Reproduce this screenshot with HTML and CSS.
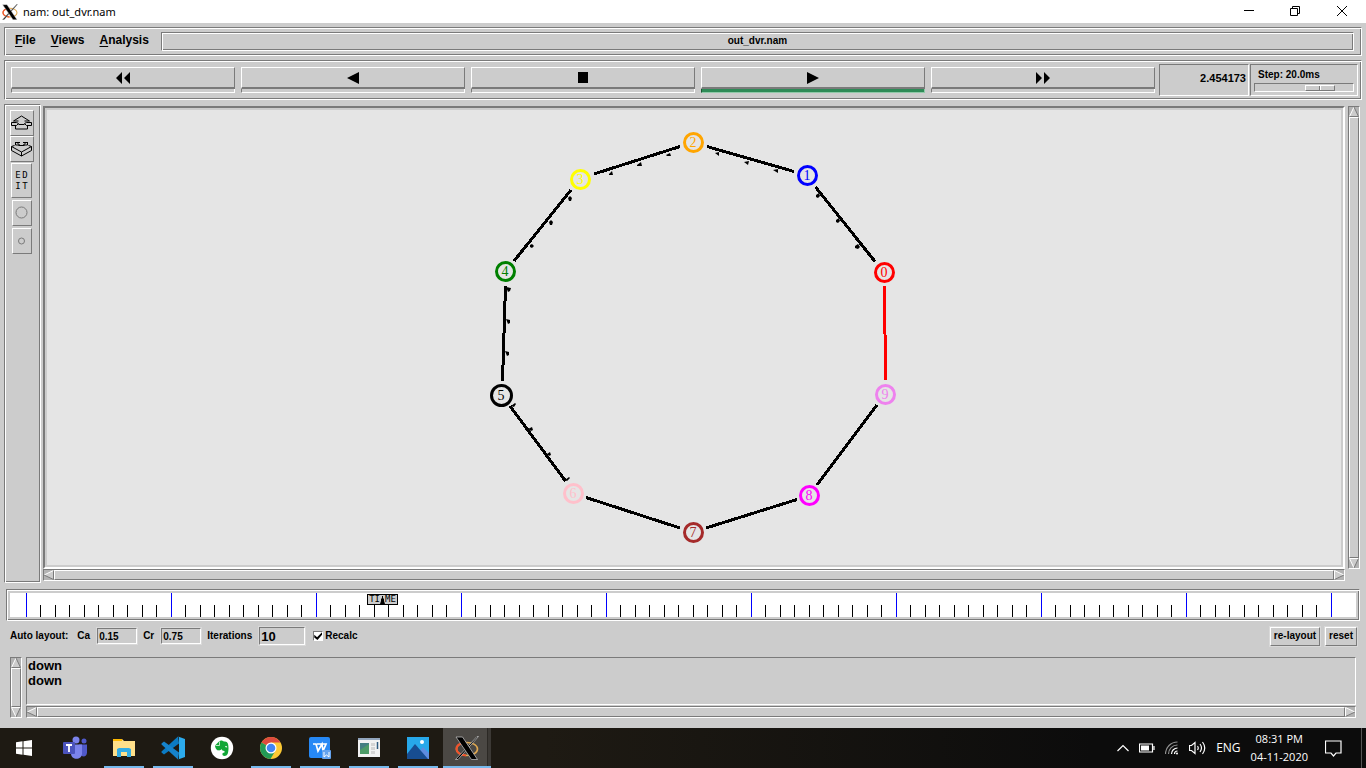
FILE: index.html
```html
<!DOCTYPE html>
<html lang="en">
<head>
<meta charset="utf-8">
<title>nam: out_dvr.nam</title>
<link rel="stylesheet" href="styles.css">
</head>
<body>
<svg width="0" height="0" class="defs" aria-hidden="true">
  <symbol id="xlogo" viewBox="0 0 24 24">
    <ellipse cx="12" cy="13" rx="10.5" ry="6.5" fill="none" stroke="#e0a850" stroke-width="1.6"/>
    <path d="M11 6.500C4 7 1 10 1.500 13.500S6 19 11 19.500" fill="none" stroke="#f0522c" stroke-width="2"/>
    <path d="M22 .5h1.500L3 23.500H.5z" fill="#000" stroke="#ccc" stroke-width=".7"/>
    <path d="M1 1h6.500L22.500 23.500h-6z" fill="#000" stroke="#ccc" stroke-width=".7"/>
  </symbol>
  <symbol id="arrow-up" viewBox="0 0 10 10"><path d="M5 0L9.500 9.500H.5z" fill="#ccc"/><path d="M5 0L.5 9.500" stroke="#fff"/><path d="M5 0L9.500 9.500H.5" fill="none" stroke="#7a7a7a"/></symbol>
  <symbol id="arrow-down" viewBox="0 0 10 10"><path d="M.5 .5h9L5 10z" fill="#ccc"/><path d="M5 10L.5 .5h9" fill="none" stroke="#fff"/><path d="M9.500 .5L5 10" stroke="#7a7a7a"/></symbol>
  <symbol id="arrow-left" viewBox="0 0 10 10"><path d="M0 5L9.500 .5v9z" fill="#ccc"/><path d="M0 5L9.500 .5" stroke="#fff"/><path d="M9.500 .5v9L0 5" fill="none" stroke="#7a7a7a"/></symbol>
  <symbol id="arrow-right" viewBox="0 0 10 10"><path d="M10 5L.5 .5v9z" fill="#ccc"/><path d="M10 5L.5 .5v9" fill="none" stroke="#fff"/><path d="M.5 9.500L10 5" stroke="#7a7a7a"/></symbol>
</svg>

<header class="titlebar">
  <svg class="title-icon" viewBox="0 0 24 24"><use href="#xlogo"/></svg>
  <h1 class="title">nam: out_dvr.nam</h1>
  <button class="win-btn" aria-label="Minimize"><svg width="12" height="12"><path d="M1 4.500h10" stroke="#000"/></svg></button>
  <button class="win-btn" aria-label="Restore"><svg width="12" height="12"><path d="M1.500 2.500h7v7h-7zM3.500 2V.5h7v7H9" fill="none" stroke="#000"/></svg></button>
  <button class="win-btn" aria-label="Close"><svg width="12" height="12"><path d="M1 0l10 10M11 0L1 10" stroke="#000"/></svg></button>
</header>

<main class="app">
  <nav class="menubar groove">
    <button class="menu"><u>F</u>ile</button>
    <button class="menu"><u>V</u>iews</button>
    <button class="menu"><u>A</u>nalysis</button>
    <div class="filename groove">out_dvr.nam</div>
  </nav>

  <section class="toolbar groove">
    <div class="transport">
      <button class="step-btn" aria-label="Rewind"><span class="face"><svg width="14" height="12"><path d="M0 6L6 0v12zM8 6l6-6v12z"/></svg></span><span class="lamp"></span></button>
      <button class="step-btn" aria-label="Play backward"><span class="face"><svg width="12" height="12"><path d="M0 6L12 0v12z"/></svg></span><span class="lamp"></span></button>
      <button class="step-btn" aria-label="Stop"><span class="face"><svg width="10" height="11"><path d="M0 0h10v11H0z"/></svg></span><span class="lamp"></span></button>
      <button class="step-btn" aria-label="Play forward"><span class="face"><svg width="12" height="12"><path d="M12 6L0 0v12z"/></svg></span><span class="lamp lamp-on"></span></button>
      <button class="step-btn" aria-label="Fast forward"><span class="face"><svg width="14" height="12"><path d="M6 6L0 0v12zM14 6L8 0v12z"/></svg></span><span class="lamp"></span></button>
    </div>
    <output class="clock sunken">2.454173</output>
    <div class="rate sunken">
      <label for="rate">Step: 20.0ms</label>
      <input type="range" id="rate" class="slider" min="0" max="100" value="74">
    </div>
  </section>

  <section class="workspace">
    <aside class="tools groove">
      <button class="tool" aria-label="Zoom in"><svg width="22" height="16" fill="none" stroke="#000"><path d="M10.500 1L2.500 6M10.500 1l8 5M2.500 6h5M18.500 6h-5M.5 7.500h5l2 1-2 2h-5zM20.500 7.500h-5l-2 1 2 2h5zM4.500 10.500v3.500h12v-3.500M7.500 9.500h6"/></svg></button>
      <button class="tool" aria-label="Zoom out"><svg width="22" height="17" fill="none" stroke="#000"><path d="M5 1.500h4M12 1.500h4.500M4.500 1v3h4l-2-2M16.500 1v3h-4l2-2M7.500 4.500h6M.5 5.500l3-1M20.500 5.500l-3-1M.5 5.500v4l10 5.500 10-5.500v-4l-10 5.500zM10.500 11v4"/></svg></button>
      <button class="tool tool-edit"><span>E</span><span>D</span><span>I</span><span>T</span></button>
      <button class="tool tool-node" aria-label="Larger nodes"><svg width="14" height="14"><circle cx="6.500" cy="6.500" r="5.500"/></svg></button>
      <button class="tool tool-node" aria-label="Smaller nodes"><svg width="14" height="14"><circle cx="6.500" cy="7" r="3"/></svg></button>
    </aside>

    <div class="view">
      <div class="canvas">
        <svg class="network" width="421" height="414" viewBox="484 131 421 414">
          <g class="links">
            <path d="M594 174L680 146.500M571 190L514 261M505.500 286L502.500 381M510 406L565.500 481M586 497.500L680 528M706 528L797 499.500M817 485L877 405M815.500 187L875 261.500M707 146.500L794 171.500"/>
            <path class="link-down" d="M884.500 286L885.500 380"/>
          </g>
          <path class="packets" d="M715 153l4-1v4zM744 162l5-1-1 4zM773 170l5-1v4zM816 195l3-2 1 3-2 2-2-1zM836 220l3-2 1 3-2 2-2-1zM855 246l3-2 2 3-2 2-3-1zM609 174l3-3 1 4h-4zM637 165l4-3 1 4h-5zM666 155l4-2 1 3h-4zM568 198l2-2 2 2-1 3h-2zM549 222l2-2 2 2-1 3h-2zM530 245l2-1 2 2-2 2-2-1zM506 287l5 1-1 3-2 1zM506 319l4 1v3l-2 1zM505 351l4 1v3l-2 1zM511 406l4-3 1 1-2 3zM528 429l4-2 1 3-2 1zM547 454l3-2 1 3-2 1zM565 480l4-3 1 1-3 3z"/>
          <g class="node n0"><circle cx="884.500" cy="272.500" r="9"/><text x="884" y="277">0</text></g>
          <g class="node n1"><circle cx="807.500" cy="175.500" r="9"/><text x="807" y="180">1</text></g>
          <g class="node n2"><circle cx="693.500" cy="142.500" r="9"/><text x="693" y="147">2</text></g>
          <g class="node n3"><circle cx="580.500" cy="179.500" r="9"/><text x="580" y="184">3</text></g>
          <g class="node n4"><circle cx="505.500" cy="271.500" r="9"/><text x="505" y="276">4</text></g>
          <g class="node n5"><circle cx="501.500" cy="395.500" r="10"/><text x="501" y="400">5</text></g>
          <g class="node n6"><circle cx="573.500" cy="493.500" r="9"/><text x="573" y="498">6</text></g>
          <g class="node n7"><circle cx="693.500" cy="532.500" r="9"/><text x="693" y="537">7</text></g>
          <g class="node n8"><circle cx="809.500" cy="495.500" r="9"/><text x="809" y="500">8</text></g>
          <g class="node n9"><circle cx="885.500" cy="394.500" r="9"/><text x="885" y="399">9</text></g>
        </svg>
      </div>
      <div class="scroll scroll-h"><svg><use href="#arrow-left"/></svg><div class="thumb"></div><svg><use href="#arrow-right"/></svg></div>
    </div>
    <div class="scroll scroll-v"><svg><use href="#arrow-up"/></svg><div class="thumb"></div><svg><use href="#arrow-down"/></svg></div>
  </section>

  <section class="timeline groove">
    <div class="track">
      <svg class="ticks" width="100%" height="24">
        <defs><pattern id="tick" x="16" width="145" height="24" patternUnits="userSpaceOnUse">
          <path fill="#00f" d="M0 0h1v24H0z"/>
          <path d="M14 12h1v12h-1zM29 12h1v12h-1zM43 12h1v12h-1zM58 12h1v12h-1zM72 12h1v12h-1zM87 12h1v12h-1zM101 12h1v12h-1zM116 12h1v12h-1zM130 12h1v12h-1z"/>
        </pattern></defs>
        <rect class="tick-area" x="16" height="24" fill="url(#tick)"/>
      </svg>
      <div class="marker"><span>TI</span><svg width="5" height="8"><path d="M2 0h1v2l1 1v2l1 3H0l1-3V3l1-1z"/></svg><span>ME</span></div>
    </div>
  </section>

  <form class="layout-form">
    <span class="form-title">Auto layout:</span>
    <label for="ca">Ca</label><input id="ca" class="field" type="text" value="0.15">
    <label for="cr">Cr</label><input id="cr" class="field" type="text" value="0.75">
    <label for="iter">Iterations</label><input id="iter" class="field field-large" type="text" value="10">
    <label class="check"><input type="checkbox" checked>Recalc</label>
    <button type="button" class="push push-first">re-layout</button>
    <button type="button" class="push">reset</button>
  </form>

  <section class="log">
    <div class="scroll scroll-v"><svg><use href="#arrow-up"/></svg><div class="thumb"></div><svg><use href="#arrow-down"/></svg></div>
    <div class="log-body">
      <textarea class="log-text sunken" rows="3" readonly aria-label="Annotations">down
down</textarea>
      <div class="scroll scroll-h"><svg><use href="#arrow-left"/></svg><div class="thumb"></div><svg><use href="#arrow-right"/></svg></div>
    </div>
  </section>
</main>

<footer class="taskbar">
  <button class="task" aria-label="Start"><svg width="16" height="16" fill="#fff"><path d="M0 2.200L6.500 1.300v6.200H0zM7.500 1.200L16 0v7.500H7.500zM0 8.500h6.500v6.200L0 13.800zM7.500 8.500H16V16l-8.500-1.200z"/></svg></button>
  <div class="tasks">
    <button class="task" aria-label="Teams"><svg width="24" height="24"><circle cx="21" cy="5" r="2.500" fill="#5059c9"/><circle cx="13" cy="4" r="3.500" fill="#7b83eb"/><path d="M16 8.500h8v8c0 5-6 5-7 1z" fill="#5059c9"/><path d="M8 8.500h11v9c0 7-11 7-11 0z" fill="#7b83eb"/><rect y="6" width="12" height="12" rx="1" fill="#4b53bc"/><path d="M3 9h6M6 9v7" stroke="#fff" stroke-width="1.800"/></svg></button>
    <button class="task running" aria-label="File Explorer"><svg width="22" height="20"><path d="M0 1h9l2 2h11v15H0z" fill="#ffe08a"/><path d="M0 1h9v2H0z" fill="#ffb900"/><path d="M4 19v-8l2-1h10l2 1v8h-4v-5H8v5z" fill="#34ade4"/></svg></button>
    <button class="task running" aria-label="Visual Studio Code"><svg width="24" height="24"><path d="M17 .5L.5 15.500v1L3 18.500l15-11z" fill="#0b7bc4"/><path d="M17 23.500L.5 8.500v-1L3 5.500l15 11z" fill="#1683cc"/><path d="M17 .5L24 3v18l-7 2.500c1-.5 1-1 1-2V3c0-1 0-2-1-2.500z" fill="#2cabed"/></svg></button>
    <button class="task" aria-label="Evernote"><svg width="24" height="24"><circle cx="12" cy="12" r="11.200" fill="#fff"/><path d="M5 9.500L9 5.500c2-2 4-.5 5 0 3 0 4.500 1 4.500 6.500 0 5-1 8-4 8-2.500 0-3-3.500 0-3.500v-1.500c-2 0-2.500-1-3-2-1 2-4 1.500-5 .5-1-1-1.500-3-1.500-4z" fill="#12a737"/><path d="M9.500 5.500v4H5.500" fill="none" stroke="#fff" stroke-width=".7"/><path d="M15 11c.5-1.500 2-1 2.200.5z" fill="#fff"/></svg></button>
    <button class="task running" aria-label="Chrome"><svg width="24" height="24"><circle cx="12" cy="12" r="11" fill="#fcc934"/><path d="M12 12L2.500 6.500A11 11 0 0 1 21.500 6.500H12z" fill="#de4b3e"/><path d="M2.500 6.500A11 11 0 0 0 11.500 23l5-8.500L12 12z" fill="#239b56"/><circle cx="12" cy="12" r="5.500" fill="#fff"/><circle cx="12" cy="12" r="4.300" fill="#4285f4"/></svg></button>
    <button class="task running" aria-label="WPS Office"><svg width="22" height="22"><rect width="21" height="21" rx="2" fill="#2688f5"/><path d="M4 7h3l2 7 4-7 1 7 3-7H8" fill="none" stroke="#fff" stroke-width="1.700"/><rect x="13" y="13" width="9" height="9" rx="1" fill="#65a3ee"/><path d="M15 15v5l2.500-2 2.500 2v-5" fill="none" stroke="#fff"/></svg></button>
    <button class="task running" aria-label="Application window"><svg width="22" height="20"><path d="M0 0h22v19H0z" fill="#f2f2f2"/><path d="M0 0h22v2H0z" fill="#92a5bd"/><path d="M2 5h9v11H2z" fill="#457f82"/><path d="M2 12l9-6v10H2z" fill="#4d9b67"/><path d="M13 5h4v3h-4zM13 9h4v3h-4zM13 13h4v3h-4z" fill="#d5d5d5"/><path d="M19.500 4v7" stroke="#305c80" stroke-width="1.500"/></svg></button>
    <button class="task running" aria-label="Photos"><svg width="22" height="22"><path d="M0 0h22v22H0z" fill="#27a8ea"/><path d="M10 17l6-7 6 6v6H10z" fill="#5d8ce0"/><path d="M0 17L8 7l13 15H0z" fill="#174d91"/><circle cx="15" cy="5" r="2" fill="#fff"/></svg></button>
    <button class="task running active" aria-label="nam"><svg width="24" height="24"><use href="#xlogo"/></svg></button>
  </div>
  <div class="tray">
    <button class="tray-btn" aria-label="Show hidden icons"><svg width="12" height="8"><path d="M.5 7L6 1.500 11.500 7"/></svg></button>
    <button class="tray-btn" aria-label="Battery"><svg width="16" height="10"><path d="M.5 1h13v8H.5zM15 3v4"/><path d="M2 2.500h8v5H2z" fill="#fff" stroke="none"/></svg></button>
    <button class="tray-btn" aria-label="Network"><svg width="14" height="14"><path d="M9.500 13a3 3 0 0 1 3-3M6.500 13a6 6 0 0 1 6-6"/><path d="M3.500 13a9 9 0 0 1 9-9M.5 13a12 12 0 0 1 12-12" opacity=".55"/><circle cx="12" cy="12.500" r="1" fill="#fff" stroke="none"/></svg></button>
    <button class="tray-btn" aria-label="Volume"><svg width="17" height="14"><path d="M.5 4.500h2L6 1.500v11L2.500 9.500h-2zM8.500 5q1.500 2 0 4M11 3q3 4 0 8M13.500 1q4.500 6 0 12"/></svg></button>
    <button class="tray-btn tray-text">ENG</button>
    <button class="tray-btn tray-text tray-time">08:31 PM<br>04-11-2020</button>
    <button class="tray-btn" aria-label="Notifications"><svg width="17" height="17"><path d="M.5 1h15.500v12H11l-2.500 3L6 13H.5z"/></svg></button>
  </div>
</footer>
</body>
</html>
```

FILE: styles.css
```css
:root {
  --face: #ccc;
  --dark: #7a7a7a;
  --light: #fff;
}

* { box-sizing: border-box; }

body {
  margin: 0;
  min-height: 100vh;
  display: flex;
  flex-direction: column;
  background: var(--face);
  color: #000;
  font: bold 10px/12px "Liberation Sans", Arial, sans-serif;
}

.defs { position: absolute; }

button, input, textarea {
  margin: 0;
  padding: 0;
  border: 0;
  border-radius: 0;
  background: none;
  color: inherit;
  font: inherit;
}

svg { display: block; flex: none; }

.groove {
  border: 1px solid;
  border-color: var(--dark) var(--light) var(--light) var(--dark);
  box-shadow: inset 1px 1px var(--light), inset -1px -1px var(--dark);
}

.sunken {
  border: 1px solid;
  border-color: var(--dark) var(--light) var(--light) var(--dark);
}

/* Title bar */
.titlebar {
  display: flex;
  align-items: center;
  height: 23px;
  padding-left: 2px;
  background: #fff;
}
.title-icon { width: 16px; height: 16px; }
.title {
  flex: 1;
  margin: 0 0 0 5px;
  font: 12px/20px "Noto Sans", "Open Sans", sans-serif;
  font-size: 11px;
}
.win-btn {
  display: grid;
  place-items: center;
  width: 46px;
  height: 21px;
}
.win-btn:last-child { width: 48px; }

.app {
  flex: 1;
  display: flex;
  flex-direction: column;
  padding: 4px 4px 10px;
}

/* Menu bar */
.menubar {
  display: flex;
  align-items: center;
  height: 29px;
  padding: 0 7px 0 10px;
  gap: 15px;
}
.menu {
  height: 20px;
  padding-bottom: 3px;
  font-size: 12px;
  line-height: 16px;
}
.menu u { text-underline-offset: 2px; }
.filename {
  flex: 1;
  height: 19px;
  margin-left: -3px;
  line-height: 16px;
  text-align: center;
}

/* Transport */
.toolbar {
  display: flex;
  height: 40px;
  margin-top: 4px;
  padding: 3px;
}
.transport {
  flex: 1;
  display: flex;
  gap: 6px;
  padding: 3px 4px 3px 3px;
}
.step-btn {
  flex: 1;
  display: flex;
  flex-direction: column;
}
.face {
  display: grid;
  place-items: center;
  width: 100%;
  height: 22px;
  border: 1px solid;
  border-width: 1px 1px 2px;
  border-color: var(--light) var(--dark) var(--dark) var(--light);
}
.lamp {
  width: 100%;
  height: 4px;
  border: 1px solid;
  border-color: transparent var(--light) var(--light) var(--dark);
  border-top: 0;
}
.lamp-on {
  background: #2e8b57;
  border-color: #8fc9a8 #8fc9a8 #8fc9a8 #1c5334;
}
.clock {
  width: 90px;
  padding-right: 2px;
  font-size: 11px;
  line-height: 27px;
  text-align: right;
}
.rate {
  width: 108px;
  margin-left: 1px;
  padding: 4px 3px 0;
}
.rate label {
  display: block;
  padding-left: 4px;
}
.slider {
  display: block;
  appearance: none;
  width: 100%;
  height: 9px;
  margin-top: 2px;
  border: 1px solid;
  border-color: var(--dark) var(--light) var(--light) var(--dark);
}
.slider::-webkit-slider-thumb {
  appearance: none;
  width: 30px;
  height: 6px;
  border: 1px solid;
  border-color: var(--light) var(--dark) var(--dark) var(--light);
  background: linear-gradient(90deg, var(--face) 13px, var(--dark) 13px 14px, var(--light) 14px 15px, var(--face) 15px);
}

/* Workspace */
.workspace {
  flex: 1;
  display: flex;
  gap: 2px;
  margin-top: 4px;
}
.tools {
  display: flex;
  flex-direction: column;
  align-items: center;
  width: 37px;
  padding: 5px 2px 0 0;
}
.tool {
  display: grid;
  place-items: center;
  width: 24px;
  height: 26px;
  border: 1px solid;
  border-color: var(--light) var(--dark) var(--dark) var(--light);
}
.tool-edit {
  grid-template-columns: 7px 7px;
  align-content: center;
  justify-content: center;
  row-gap: 1px;
  width: 21px;
  height: 35px;
  margin-top: 1px;
  font: 9px/10px "DejaVu Sans Mono", monospace;
}
.tool-node {
  width: 20px;
  margin-top: 2px;
}
.tool-node circle { fill: none; stroke: var(--dark); }

.view {
  flex: 1;
  display: flex;
  flex-direction: column;
  padding: 2px 0;
}
.canvas {
  flex: 1;
  display: grid;
  place-items: center;
  border: 2px solid;
  border-color: var(--dark) var(--light) var(--light) var(--dark);
  background: #e5e5e5;
  box-shadow: inset 0 0 0 2px var(--face);
}
.links {
  fill: none;
  stroke: #000;
  stroke-width: 3;
  shape-rendering: crispEdges;
}
.link-down { stroke: red; }
.node circle { fill: none; stroke: currentColor; stroke-width: 3; }
.node text {
  fill: currentColor;
  font: 14px "Liberation Serif", "Times New Roman", serif;
  text-anchor: middle;
}
.n0 { color: red; }
.n1 { color: blue; }
.n2 { color: orange; }
.n3 { color: yellow; }
.n4 { color: green; }
.n5 { color: black; }
.n6 { color: pink; }
.n7 { color: brown; }
.n8 { color: magenta; }
.n9 { color: violet; }

/* Scroll bars */
.scroll {
  display: flex;
  border: 1px solid;
  border-color: var(--dark) var(--light) var(--light) var(--dark);
  background: #b3b3b3;
}
.scroll svg { width: 10px; height: 10px; }
.scroll-h { height: 12px; }
.scroll-v { flex-direction: column; width: 12px; }
.thumb {
  flex: 1;
  border: 1px solid;
  border-color: var(--light) var(--dark) var(--dark) var(--light);
  background: var(--face);
}
.workspace > .scroll-v { margin: 2px 2px 14px 1px; }

/* Timeline */
.timeline {
  margin: 6px 2px 0;
  padding: 3px;
}
.track {
  position: relative;
  background: #fff;
}
.tick-area { width: calc(100% - 39px); }
.marker {
  position: absolute;
  left: 357px;
  top: 1px;
  display: flex;
  align-items: center;
  justify-content: center;
  width: 31px;
  height: 11px;
  border: 1px solid #000;
  background: var(--face);
  font: 9px/9px "DejaVu Sans Mono", monospace;
}

/* Layout parameters */
.layout-form {
  display: flex;
  align-items: center;
  height: 30px;
  padding: 0 5px 0 6px;
}
.form-title { margin-right: 9px; }
.field {
  width: 40px;
  height: 16px;
  margin: 0 6px 0 7px;
  padding-left: 1px;
  border: 1px solid;
  border-color: var(--dark) var(--light) var(--light) var(--dark);
  outline: 1px solid #d9d9d9;
}
.field-large {
  width: 46px;
  height: 18px;
  margin-right: 8px;
  font-size: 13px;
}
.check {
  display: flex;
  align-items: center;
  gap: 2px;
}
.check input {
  appearance: none;
  display: grid;
  place-items: center;
  width: 10px;
  height: 10px;
  border: 1px solid;
  border-color: var(--dark) var(--light) var(--light) var(--dark);
  background: #fff;
}
.check input:checked::before {
  content: "";
  width: 8px;
  height: 8px;
  background: #000;
  clip-path: polygon(0 35%, 35% 65%, 100% 0, 100% 30%, 40% 100%, 0 70%);
}
.push {
  height: 19px;
  margin-left: 5px;
  padding: 0 3px 1px;
  border: 1px solid;
  border-color: var(--light) var(--dark) var(--dark) var(--light);
  outline: 1px solid #d9d9d9;
}
.push-first { margin-left: auto; }

/* Log */
.log {
  display: flex;
  gap: 4px;
  margin-top: 6px;
  padding: 0 6px;
}
.log-body {
  flex: 1;
  display: flex;
  flex-direction: column;
  gap: 1px;
}
.log-text {
  width: 100%;
  height: 48px;
  resize: none;
  overflow: hidden;
  padding-left: 1px;
  font-size: 13px;
  line-height: 15px;
}

/* Taskbar */
.taskbar {
  display: flex;
  height: 40px;
  background: linear-gradient(90deg, #1e1a13, #1e1a13 40%, #0c0c0c 80%);
  color: #fff;
}
.task {
  position: relative;
  display: grid;
  place-items: center;
  width: 48px;
  height: 40px;
}
.tasks {
  display: flex;
  gap: 1px;
  margin-left: 3px;
}
.running::after {
  content: "";
  position: absolute;
  bottom: 0;
  left: 4px;
  right: 4px;
  height: 2px;
  background: #76b9ed;
}
.active { background: linear-gradient(90deg, #4b4844 44px, #2c2925 44px 45px, #3c3935 45px); }
.active::after { left: 0; right: 0; }
.tray {
  display: flex;
  align-items: center;
  gap: 10px;
  margin: 0 4px 0 auto;
  padding-right: 19px;
  border-right: 1px solid #555;
}
.tray-btn svg { fill: none; stroke: #fff; stroke-width: 1.2; }
.tray-text { font: 12px/18px "Open Sans", "Noto Sans", sans-serif; }
.tray-time { margin-right: 7px; font-size: 11px; }
```
